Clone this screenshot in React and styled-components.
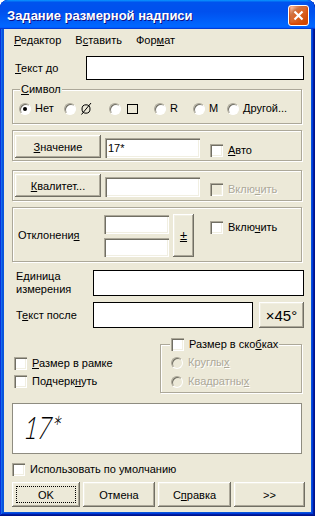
import React from "react";
import styled, { createGlobalStyle } from "styled-components";

const GlobalStyle = createGlobalStyle`
  html, body {
    margin: 0;
    padding: 0;
    background: #ffffff;
  }
`;

const Window = styled.div`
  width: 315px;
  height: 516px;
  box-sizing: border-box;
  display: flex;
  flex-direction: column;
  padding: 0 4px 4px;
  background: #0855dd;
  box-shadow: inset -1px -1px #00138c, inset 1px 1px #0831d9,
    inset -2px -2px #001ea0, inset 2px 2px #166aee, inset -3px -3px #003bda,
    inset 3px 3px #0855dd;
  border-radius: 8px 8px 0 0;
  overflow: hidden;
  font-family: "Liberation Sans", Arial, sans-serif;
  font-size: 11px;
  color: #000;
`;

const TitleBar = styled.div`
  height: 29px;
  margin: 0 -4px;
  padding: 0 6px 0 7px;
  display: flex;
  align-items: center;
  justify-content: space-between;
  background: linear-gradient(
    180deg,
    #0997ff,
    #0053ee 8%,
    #0050ee 40%,
    #0066ff 88%,
    #0066ff 93%,
    #005bff 95%,
    #003dd7 96%,
    #003dd7
  );
  border-radius: 8px 8px 0 0;
`;

const TitleText = styled.span`
  margin-top: 2px;
  font-size: 13px;
  font-weight: 700;
  color: #fff;
  text-shadow: 1px 1px #0f1089;
`;

const CloseButton = styled.div`
  width: 21px;
  height: 21px;
  margin-top: 2px;
  box-sizing: border-box;
  border: 1px solid #fff;
  border-radius: 3px;
  display: flex;
  align-items: center;
  justify-content: center;
  background: radial-gradient(
    circle at 90% 90%,
    #cc4600 0,
    #dc6527 55%,
    #cd7546 70%,
    #ffccb2 90%,
    #fff 100%
  );
  box-shadow: inset 0 -1px 2px 1px #da4600;
`;

const Body = styled.div`
  flex: 1;
  display: flex;
  flex-direction: column;
  background: #ece9d8;
`;

const MenuBar = styled.div`
  height: 22px;
  display: flex;
  align-items: center;
  padding-left: 3px;
`;

const MenuItem = styled.span`
  padding: 0 7px;
`;

const Content = styled.div`
  display: flex;
  flex-direction: column;
  padding: 0 7px 0 8px;
`;

const U = styled.u`
  text-decoration: underline;
`;

const Row = styled.div`
  display: flex;
  align-items: center;
  margin-top: ${(p) => p.$mt || 0}px;
`;

const FieldLabel = styled.div`
  width: ${(p) => p.$w}px;
  box-sizing: border-box;
  padding-left: ${(p) => p.$pl || 0}px;
  line-height: 13px;
`;

const FlatInput = styled.div`
  height: ${(p) => p.$h}px;
  box-sizing: border-box;
  ${(p) => (p.$w ? `width: ${p.$w}px;` : "flex: 1;")}
  background: #fff;
  border: 1px solid #000;
`;

const SunkenInput = styled.div`
  width: ${(p) => p.$w}px;
  height: ${(p) => p.$h}px;
  margin-left: ${(p) => p.$ml || 0}px;
  box-sizing: border-box;
  padding: 3px 3px 0;
  background: #fff;
  box-shadow: inset 1px 1px #aca899, inset 2px 2px #716f64,
    inset -1px -1px #fff, inset -2px -2px #f1efe2;
  line-height: 14px;
`;

const PushButton = styled.div`
  width: ${(p) => p.$w}px;
  height: ${(p) => p.$h}px;
  margin-left: ${(p) => p.$ml || 0}px;
  box-sizing: border-box;
  display: flex;
  align-items: center;
  justify-content: center;
  position: relative;
  background: #ece9d8;
  box-shadow: inset -1px -1px #716f64, inset 1px 1px #fff,
    inset -2px -2px #aca899, inset 2px 2px #f1efe2;
  font-size: ${(p) => p.$fs || 11}px;
`;

const FocusRing = styled.span`
  position: absolute;
  inset: 4px;
  border: 1px dotted #000;
`;

const Group = styled.div`
  position: relative;
  margin-top: ${(p) => p.$mt || 0}px;
  margin-right: 2px;
  padding: ${(p) => p.$pad};
  border: 1px solid #aca899;
  box-shadow: inset 1px 1px #fff, 1px 1px #fff;
  display: flex;
  ${(p) => (p.$col ? "flex-direction: column;" : "")}
  align-items: ${(p) => p.$align || (p.$col ? "stretch" : "flex-end")};
  ${(p) => (p.$w ? `width: ${p.$w}px; gap: 6px;` : "")}
`;

const Legend = styled.div`
  position: absolute;
  top: -7px;
  left: ${(p) => p.$left}px;
  padding: 0 1px;
  line-height: 13px;
  background: #ece9d8;
`;

const CheckItem = styled.label`
  display: flex;
  align-items: center;
  gap: 5px;
  margin-left: ${(p) => p.$ml || 0}px;
  margin-top: ${(p) => p.$mt || 0}px;
  margin-bottom: ${(p) => p.$mb || 0}px;
  align-self: ${(p) => p.$self || "auto"};
  line-height: 13px;
  color: ${(p) => (p.$off ? "#aca899" : "#000")};
  text-shadow: ${(p) => (p.$off ? "1px 1px #fff" : "none")};
`;

const Box = styled.span`
  width: 13px;
  height: 13px;
  flex: none;
  box-sizing: border-box;
  background: ${(p) => (p.$off ? "#ece9d8" : "#fff")};
  box-shadow: inset 1px 1px #aca899, inset 2px 2px #716f64,
    inset -1px -1px #fff, inset -2px -2px #f1efe2;
`;

const Radio = styled.span`
  width: 12px;
  height: 12px;
  flex: none;
  box-sizing: border-box;
  border-radius: 50%;
  display: flex;
  align-items: center;
  justify-content: center;
  border: 1px solid;
  border-color: #aca899 #fff #fff #aca899;
  background: ${(p) => (p.$off ? "#ece9d8" : "#fff")};
  box-shadow: inset 1px 1px #716f64;
  &::after {
    content: "";
    width: 4px;
    height: 4px;
    border-radius: 50%;
    background: ${(p) => (p.$on ? "#000" : "transparent")};
  }
`;

const Options = styled.div`
  display: flex;
  align-items: center;
`;

const Option = styled.div`
  ${(p) => (p.$w ? `width: ${p.$w}px;` : "flex: 1;")}
  display: flex;
  align-items: center;
  gap: 4px;
  line-height: 13px;
`;

const SquareMark = styled.span`
  width: 11px;
  height: 10px;
  margin-left: 2px;
  box-sizing: border-box;
  border: 1px solid #000;
`;

const InputStack = styled.div`
  display: flex;
  flex-direction: column;
  gap: 4px;
`;

const Split = styled.div`
  display: flex;
  margin-top: 11px;
`;

const LeftChecks = styled.div`
  flex: 1;
  display: flex;
  flex-direction: column;
  gap: 5px;
  padding: 18px 0 0 2px;
`;

const Preview = styled.div`
  height: 51px;
  margin: 10px 2px 0 0;
  box-sizing: border-box;
  padding: 8px 0 0 9px;
  background: #fff;
  border: 1px solid #8e8c80;
`;

const PreviewText = styled.span`
  display: inline-block;
  transform: scaleX(0.74) skewX(-16deg);
  transform-origin: left bottom;
  font-family: "Lato", "Liberation Sans", sans-serif;
  font-weight: 300;
  font-size: 31px;
  line-height: 30px;
`;

const ButtonBar = styled.div`
  display: grid;
  grid-template-columns: 68px 72px 73px 71px;
  column-gap: 3px;
  margin: 6px -1px 0 0;
`;

function XIcon() {
  return (
    <svg width="11" height="11" viewBox="0 0 11 11">
      <path d="M1.5 1.5 L9.5 9.5 M9.5 1.5 L1.5 9.5" stroke="#fff" strokeWidth="2.2" />
    </svg>
  );
}

function DiameterIcon() {
  return (
    <svg width="12" height="13" viewBox="0 0 12 13">
      <ellipse cx="6" cy="7" rx="4" ry="4.2" fill="none" stroke="#000" strokeWidth="1" />
      <path d="M1.5 12.5 L11 1" stroke="#000" strokeWidth="1" />
    </svg>
  );
}

export default function App() {
  return (
    <>
      <GlobalStyle />
      <Window>
        <TitleBar>
          <TitleText>Задание размерной надписи</TitleText>
          <CloseButton>
            <XIcon />
          </CloseButton>
        </TitleBar>
        <Body>
          <MenuBar>
            <MenuItem><U>Р</U>едактор</MenuItem>
            <MenuItem>В<U>с</U>тавить</MenuItem>
            <MenuItem>Фор<U>м</U>ат</MenuItem>
          </MenuBar>
          <Content>
            <Row $mt={5}>
              <FieldLabel $w={74} $pl={3}>
                <U>Т</U>екст до
              </FieldLabel>
              <FlatInput $h={24} />
            </Row>

            <Group $mt={9} $col $pad="12px 0 8px 6px">
              <Legend $left={7}>
                <U>С</U>имвол
              </Legend>
              <Options>
                <Option $w={45}>
                  <Radio $on />
                  Нет
                </Option>
                <Option $w={45}>
                  <Radio />
                  <DiameterIcon />
                </Option>
                <Option $w={45}>
                  <Radio />
                  <SquareMark />
                </Option>
                <Option $w={39}>
                  <Radio />R
                </Option>
                <Option $w={34}>
                  <Radio />M
                </Option>
                <Option>
                  <Radio />
                  Другой...
                </Option>
              </Options>
            </Group>

            <Group $mt={6} $pad="4px 0 2px 2px">
              <PushButton $w={86} $h={23}>
                <span><U>З</U>начение</span>
              </PushButton>
              <SunkenInput $w={95} $h={20} $ml={4}>
                17*
              </SunkenInput>
              <CheckItem $ml={10} $mb={1}>
                <Box />
                <span><U>А</U>вто</span>
              </CheckItem>
            </Group>

            <Group $mt={9} $pad="3px 0 3px 2px">
              <PushButton $w={86} $h={23}>
                <span><U>К</U>валитет...</span>
              </PushButton>
              <SunkenInput $w={95} $h={20} $ml={4} />
              <CheckItem $ml={10} $mb={1} $off>
                <Box $off />
                <span>Вклю<U>ч</U>ить</span>
              </CheckItem>
            </Group>

            <Group $mt={6} $pad="6px 0 4px 5px" $align="center">
              <FieldLabel $w={86}>
                Отклонени<U>я</U>
              </FieldLabel>
              <InputStack>
                <SunkenInput $w={65} $h={19} />
                <SunkenInput $w={65} $h={19} />
              </InputStack>
              <PushButton $w={21} $h={43} $ml={4} $fs={13}>
                <U>±</U>
              </PushButton>
              <CheckItem $ml={16} $self="flex-start" $mt={7}>
                <Box />
                <span>Вклю<U>ч</U>ить</span>
              </CheckItem>
            </Group>

            <Row $mt={8}>
              <FieldLabel $w={81} $pl={4}>
                Единица
                <br />
                измерения
              </FieldLabel>
              <FlatInput $h={26} />
            </Row>

            <Row $mt={6}>
              <FieldLabel $w={81} $pl={4}>
                Т<U>е</U>кст после
              </FieldLabel>
              <FlatInput $h={26} $w={160} />
              <PushButton $w={45} $h={26} $ml={6} $fs={15}>
                ×45°
              </PushButton>
            </Row>

            <Split>
              <LeftChecks>
                <CheckItem>
                  <Box />
                  <span><U>Р</U>азмер в рамке</span>
                </CheckItem>
                <CheckItem>
                  <Box />
                  <span>Подчерк<U>н</U>уть</span>
                </CheckItem>
              </LeftChecks>
              <Group $mt={5} $col $w={130} $pad="11px 0 4px 10px">
                <Legend $left={9}>
                  <CheckItem>
                    <Box />
                    <span>Размер в ско<U>б</U>ках</span>
                  </CheckItem>
                </Legend>
                <CheckItem $off>
                  <Radio $off />
                  <span>Круглы<U>х</U></span>
                </CheckItem>
                <CheckItem $off>
                  <Radio $off />
                  <span>Квадратны<U>х</U></span>
                </CheckItem>
              </Group>
            </Split>

            <Preview>
              <PreviewText>17*</PreviewText>
            </Preview>

            <CheckItem $mt={9}>
              <Box />
              <span>Использовать по умолчанию</span>
            </CheckItem>

            <ButtonBar>
              <PushButton $h={25}>
                <FocusRing />
                OK
              </PushButton>
              <PushButton $h={25}>Отмена</PushButton>
              <PushButton $h={25}>
                <span>С<U>п</U>равка</span>
              </PushButton>
              <PushButton $h={25}>&gt;&gt;</PushButton>
            </ButtonBar>
          </Content>
        </Body>
      </Window>
    </>
  );
}
